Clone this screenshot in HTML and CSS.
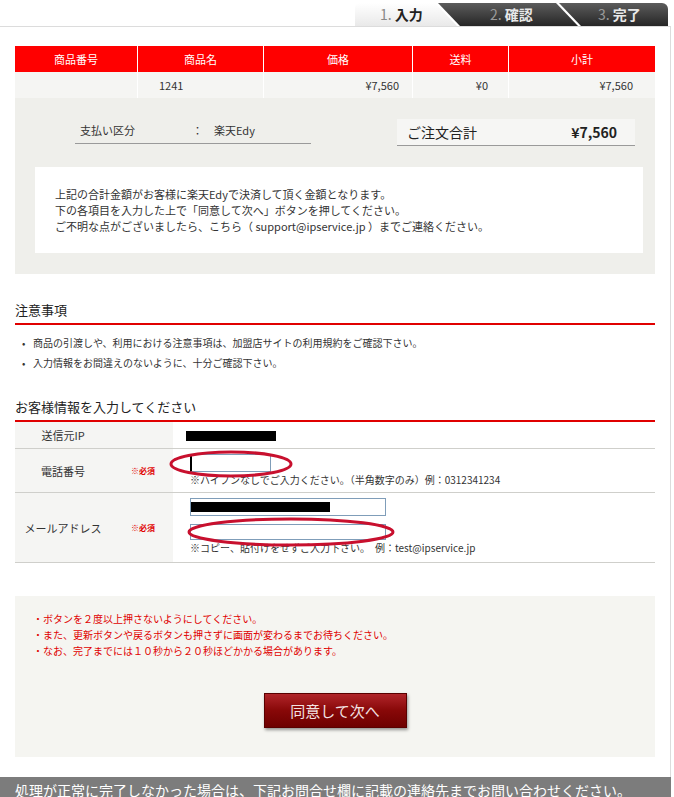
FILE: index.html
```html
<!DOCTYPE html>
<html lang="ja">
<head>
    <meta charset="UTF-8">
    <title>お支払い情報入力 - 楽天Edy</title>
    <link rel="stylesheet" href="styles.css">
</head>
<body>
    <div class="page">
        <!-- Step tabs -->
        <div class="steps">
            <div class="step step-current"><span class="step-num">1.</span> 入力</div>
            <div class="step step-mid"><span class="step-num">2.</span> 確認</div>
            <div class="step step-last"><span class="step-num">3.</span> 完了</div>
        </div>

        <div class="panel">
            <!-- Order table -->
            <table class="order-table">
                <tr>
                    <th>商品番号</th>
                    <th>商品名</th>
                    <th>価格</th>
                    <th>送料</th>
                    <th>小計</th>
                </tr>
                <tr>
                    <td></td>
                    <td class="item-name">1241</td>
                    <td class="num">¥7,560</td>
                    <td class="num">¥0</td>
                    <td class="num">¥7,560</td>
                </tr>
            </table>

            <!-- Payment summary -->
            <div class="summary">
                <div class="summary-top">
                    <div class="pay-row">
                        <span class="pay-label">支払い区分</span>
                        <span class="pay-value">：　楽天Edy</span>
                    </div>
                    <div class="total-box">
                        <span class="total-label">ご注文合計</span>
                        <span class="total-price">¥7,560</span>
                    </div>
                </div>
                <div class="summary-note">
                    <p>上記の合計金額がお客様に楽天Edyで決済して頂く金額となります。</p>
                    <p>下の各項目を入力した上で「同意して次へ」ボタンを押してください。</p>
                    <p>ご不明な点がございましたら、こちら（ support@ipservice.jp ）までご連絡ください。</p>
                </div>
            </div>

            <!-- Notes -->
            <h3 class="section-title">注意事項</h3>
            <ul class="notes">
                <li>商品の引渡しや、利用における注意事項は、加盟店サイトの利用規約をご確認下さい。</li>
                <li>入力情報をお間違えのないように、十分ご確認下さい。</li>
            </ul>

            <!-- Customer form -->
            <h3 class="section-title">お客様情報を入力してください</h3>
            <div class="form-table">
                <div class="form-row row-ip">
                    <div class="form-label"><span class="label-text">送信元IP</span></div>
                    <div class="form-value">
                        <span class="redact redact-ip"></span>
                    </div>
                </div>
                <div class="form-row row-tel">
                    <div class="form-label">
                        <span class="label-text">電話番号</span>
                        <span class="required">※必須</span>
                    </div>
                    <div class="form-value">
                        <input class="input-tel" type="text" name="tel">
                        <p class="hint">※ハイフンなしでご入力ください。（半角数字のみ）例：0312341234</p>
                        <svg class="mark mark-tel" width="126" height="30" viewBox="0 0 126 30">
                            <ellipse cx="63" cy="15" rx="60" ry="12" fill="none" stroke="#c8102e" stroke-width="3"/>
                        </svg>
                    </div>
                </div>
                <div class="form-row row-mail">
                    <div class="form-label">
                        <span class="label-text">メールアドレス</span>
                        <span class="required">※必須</span>
                    </div>
                    <div class="form-value">
                        <div class="input-mail"><span class="redact redact-mail"></span></div>
                        <input class="input-mail input-mail2" type="text" name="mail2">
                        <p class="hint">※コピー、貼付けをせずご入力下さい。　例：test@ipservice.jp</p>
                        <svg class="mark mark-mail" width="212" height="32" viewBox="0 0 212 32">
                            <ellipse cx="106" cy="16" rx="102" ry="13" fill="none" stroke="#c8102e" stroke-width="3"/>
                        </svg>
                    </div>
                </div>
            </div>

            <!-- Notice and submit -->
            <div class="notice">
                <p>・ボタンを２度以上押さないようにしてください。</p>
                <p>・また、更新ボタンや戻るボタンも押さずに画面が変わるまでお待ちください。</p>
                <p>・なお、完了までには１０秒から２０秒ほどかかる場合があります。</p>
                <div class="submit-wrap">
                    <button class="submit-btn" type="submit">同意して次へ</button>
                </div>
            </div>
        </div>

        <div class="footer-bar">処理が正常に完了しなかった場合は、下記お問合せ欄に記載の連絡先までお問い合わせください。</div>
    </div>
</body>
</html>
```

FILE: styles.css
```css
body {
    margin: 0;
    background: #fff;
    font-family: "Noto Sans CJK JP", "Noto Sans", sans-serif;
    color: #333;
}

.page {
    width: 671px;
}

/* Step tabs */
.steps {
    display: flex;
    justify-content: flex-end;
    height: 23px;
    padding: 3px 3px 0 0;
}

.step {
    height: 23px;
    line-height: 23px;
    font-size: 14px;
    box-sizing: border-box;
}

.step-num {
    font-weight: normal;
}

.step-current {
    width: 102px;
    padding-left: 25px;
    font-weight: bold;
    color: #222;
    background: linear-gradient(#ffffff, #e9e9e9);
    border-radius: 5px 0 0 0;
    clip-path: polygon(0 0, 80px 0, 102px 100%, 0 100%);
}

.step-current .step-num {
    color: #888;
}

.step-mid,
.step-last {
    font-weight: bold;
    color: #e8e8e8;
    background: linear-gradient(#5c5c5c, #262626);
}

.step-mid .step-num,
.step-last .step-num {
    color: #9a9a9a;
}

.step-mid {
    width: 140px;
    margin-left: -19px;
    padding-left: 52px;
    clip-path: polygon(0 0, 118px 0, 140px 100%, 22px 100%);
}

.step-last {
    width: 109px;
    margin-left: -19px;
    padding-left: 39px;
    border-radius: 0 6px 0 0;
    clip-path: polygon(0 0, 100% 0, 100% 100%, 22px 100%);
}

/* Main panel */
.panel {
    border-top: 1px solid #dcdcdc;
    border-right: 1px solid #dcdcdc;
    padding: 19px 15px 20px 15px;
}

.order-table {
    width: 640px;
    border-collapse: collapse;
    font-size: 11px;
}

.order-table th {
    height: 26px;
    padding: 0;
    background-color: #ff0000;
    color: #fff;
    font-weight: normal;
    border-left: 1px solid #fff;
}

.order-table th:first-child,
.order-table td:first-child {
    border-left: none;
    width: 122px;
}

.order-table th:nth-child(2) { width: 125px; }
.order-table th:nth-child(3) { width: 148px; }
.order-table th:nth-child(4) { width: 95px; }

.order-table td {
    height: 26px;
    padding: 0;
    background-color: #f5f5f3;
    border-left: 1px solid #fff;
    color: #333;
}

.order-table .item-name {
    padding-left: 21px;
}

.order-table .num {
    text-align: right;
    padding-right: 13px;
}

.order-table td:nth-child(4) { padding-right: 20px; }
.order-table td:nth-child(5) { padding-right: 22px; }

/* Summary */
.summary {
    background-color: #efefeb;
    padding: 21px 12px 21px 20px;
}

.summary-top {
    display: flex;
    justify-content: space-between;
    align-items: flex-start;
    margin-bottom: 21px;
}

.pay-row {
    display: flex;
    width: 236px;
    height: 20px;
    margin: 4px 0 0 40px;
    border-bottom: 1px solid #9a9a9a;
    font-size: 11px;
    line-height: 14px;
}

.pay-label {
    width: 112px;
    padding-left: 5px;
}

.total-box {
    display: flex;
    justify-content: space-between;
    align-items: center;
    width: 238px;
    height: 27px;
    box-sizing: border-box;
    margin-right: 8px;
    padding: 0 18px 0 10px;
    background-color: #f6f6f4;
    border-bottom: 1px solid #9a9a9a;
    font-size: 14px;
    color: #222;
}

.total-price {
    font-weight: bold;
}

.summary-note {
    background-color: #fff;
    height: 86px;
    box-sizing: border-box;
    padding: 19px 0 0 20px;
    font-size: 11px;
    line-height: 16px;
    color: #333;
}

.summary-note p {
    margin: 0;
}

/* Section headings */
.section-title {
    margin: 28px 0 0 0;
    padding-bottom: 5px;
    font-size: 13px;
    line-height: 16px;
    font-weight: normal;
    color: #222;
    border-bottom: 2px solid #e00000;
}

.notes {
    list-style: none;
    margin: 8px 0 0 0;
    padding: 0 0 0 19px;
    font-size: 10px;
    line-height: 20px;
    color: #333;
}

.notes li::before {
    content: "•";
    display: inline-block;
    width: 11px;
    margin-left: -12px;
}

.notes + .section-title {
    margin-top: 26px;
}

/* Form */
.form-row {
    display: flex;
    border-bottom: 1px solid #cfcfcb;
}

.row-ip { height: 26px; }
.row-tel { height: 43px; }
.row-mail { height: 69px; }

.form-label {
    display: flex;
    align-items: center;
    width: 158px;
    background-color: #f5f5f3;
    font-size: 11px;
}

.label-text {
    width: 96px;
    text-align: center;
}

.required {
    margin-left: 20px;
    font-size: 8px;
    font-weight: bold;
    color: #e00000;
}

.form-value {
    position: relative;
    flex: 1;
    padding-left: 17px;
}

.redact {
    display: inline-block;
    background: #000;
}

.redact-ip {
    width: 90px;
    height: 10px;
    margin: 7px 0 0 -4px;
}

.input-tel,
.input-mail {
    display: block;
    box-sizing: border-box;
    border: 1px solid #7f9db9;
    background: #fff;
    padding: 0;
    font-size: 11px;
}

.input-tel {
    width: 81px;
    height: 18px;
    margin-top: 5px;
    border-left: 2px solid #000;
}

.input-mail {
    width: 196px;
    height: 18px;
    margin-top: 5px;
}

.input-mail2 {
    margin-top: 8px;
    height: 16px;
}

.redact-mail {
    width: 139px;
    height: 10px;
    margin-top: 3px;
}

.hint {
    margin: 0;
    font-size: 10px;
    line-height: 16px;
    color: #333;
}

.mark {
    position: absolute;
}

.mark-tel {
    left: -5px;
    top: 0;
}

.mark-mail {
    left: 12px;
    top: 23px;
}

/* Notice */
.notice {
    margin-top: 33px;
    background-color: #f5f5f1;
    padding: 15px 18px 29px 18px;
    font-size: 10px;
    line-height: 16px;
    color: #e00000;
}

.notice p {
    margin: 0;
}

.submit-wrap {
    display: flex;
    justify-content: center;
    margin-top: 34px;
}

.submit-btn {
    width: 143px;
    height: 35px;
    border: 1px solid #5a0000;
    background: linear-gradient(#b0252a, #880808 50%, #6e0000);
    color: #f3e3e3;
    font-family: "Noto Sans CJK JP", sans-serif;
    font-size: 15px;
    box-shadow: 1px 2px 3px rgba(0, 0, 0, 0.4);
    cursor: pointer;
}

.footer-bar {
    height: 40px;
    padding: 3px 0 0 15px;
    background-color: #7c7c7c;
    color: #fff;
    font-size: 14px;
    line-height: 20px;
}
```
